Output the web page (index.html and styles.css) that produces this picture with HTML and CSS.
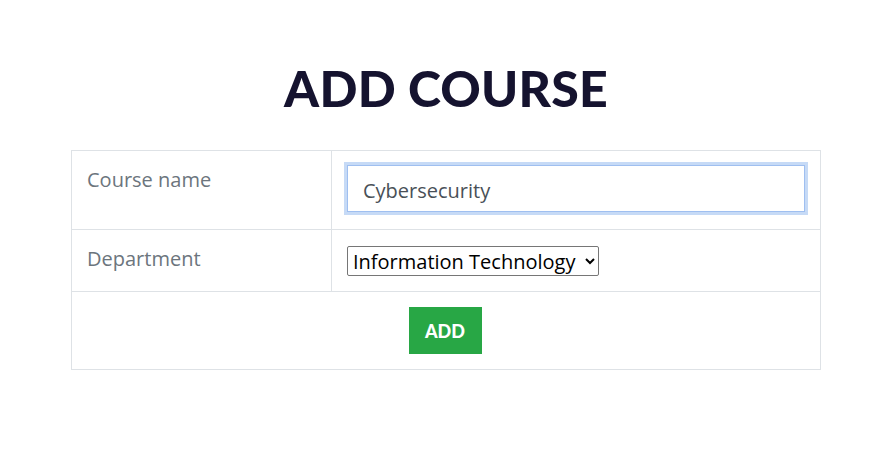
FILE: index.html
```html
<!DOCTYPE html>
<html lang="en">
<head>
<meta charset="utf-8">
<title>Add Course</title>
<link rel="stylesheet" href="styles.css">
</head>
<body>
<main class="page">
  <h1 class="title">ADD COURSE</h1>
  <form class="course-form">
    <table class="form-table">
      <tr class="row-name">
        <td class="label-cell">Course name</td>
        <td class="field-cell"><input class="text-input" type="text" value="Cybersecurity"></td>
      </tr>
      <tr class="row-dept">
        <td class="label-cell">Department</td>
        <td class="field-cell">
          <select class="dept-select">
            <option>Information Technology</option>
          </select>
        </td>
      </tr>
      <tr>
        <td class="action-cell" colspan="2"><button class="add-btn" type="button">ADD</button></td>
      </tr>
    </table>
  </form>
</main>
</body>
</html>
```
FILE: styles.css
```css
html, body {
  margin: 0;
  padding: 0;
  background: #ffffff;
}
body {
  font-family: "Open Sans", "Noto Sans", sans-serif;
  color: #212529;
}
.page {
  padding-top: 56px;
  padding-right: 1px;
}
.title {
  margin: 0 0 30px;
  text-align: center;
  font-family: Lato, "Noto Sans", sans-serif;
  font-weight: 900;
  font-size: 50px;
  line-height: 64px;
  letter-spacing: 0.2px;
  color: #15132f;
}
.course-form {
  width: 750px;
  margin: 0 auto;
}
.form-table {
  width: 750px;
  border-collapse: collapse;
}
.form-table td {
  border: 1px solid #dee2e6;
  padding: 15px 15px;
  vertical-align: top;
}
.label-cell {
  width: 229px;
  font-size: 20px;
  line-height: 27px;
  color: #6c757d;
}
.row-name .field-cell {
  padding-top: 14px;
  padding-bottom: 17px;
}
.row-dept .field-cell {
  padding-top: 16px;
  padding-bottom: 15px;
}
.text-input {
  display: block;
  box-sizing: border-box;
  width: 100%;
  height: 47px;
  margin: 0;
  padding: 3px 15px 0;
  font-family: "Open Sans", sans-serif;
  font-size: 20px;
  color: #495057;
  background: #fff;
  border: 1px solid #9fbff0;
  border-radius: 0;
  outline: none;
  box-shadow: 0 0 0 3px #c6daf6;
}
.dept-select {
  display: block;
  box-sizing: border-box;
  width: 252px;
  height: 30px;
  margin: 0;
  font-family: "Open Sans", sans-serif;
  font-size: 20px;
  color: #000;
  background: #fff;
  border: 1px solid #767676;
  border-radius: 2px;
  padding: 0 1px;
}
.action-cell {
  text-align: center;
}
.form-table .action-cell {
  padding: 15px 16px 15px 14px;
}
.add-btn {
  display: inline-block;
  vertical-align: top;
  width: 73px;
  height: 47px;
  border: none;
  border-radius: 0;
  background: #28a745;
  color: #fff;
  font-family: Lato, sans-serif;
  font-weight: 900;
  font-size: 18px;
  padding: 0;
}
```
